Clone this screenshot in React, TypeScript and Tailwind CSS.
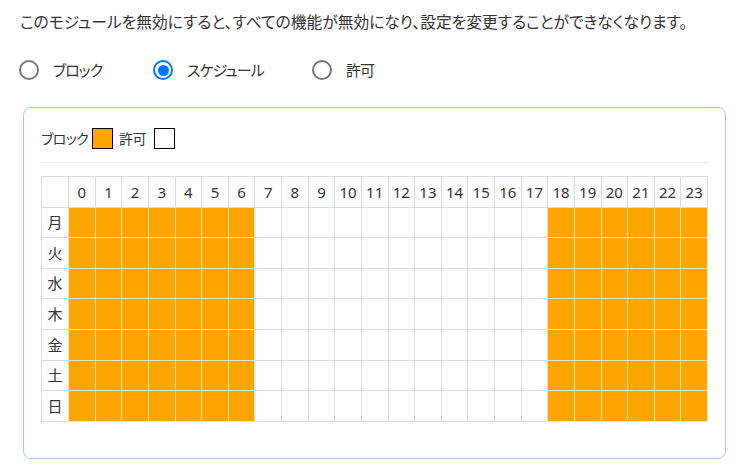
import { useState } from "react";

const days = ["月", "火", "水", "木", "金", "土", "日"];
const hours = Array.from({ length: 24 }, (_, i) => i);

// blocked hours (0-6, 18-23)
const isBlocked = (h: number) => h <= 6 || h >= 18;

function Radio({
  checked,
  label,
  width,
  onClick,
}: {
  checked: boolean;
  label: string;
  width: string;
  onClick: () => void;
}) {
  return (
    <label className={`flex items-center cursor-pointer ${width}`} onClick={onClick}>
      {checked ? (
        <span className="w-[20px] h-[20px] rounded-full border-2 border-[#0075ff] flex items-center justify-center">
          <span className="w-[11px] h-[11px] rounded-full bg-[#0075ff]" />
        </span>
      ) : (
        <span className="w-[20px] h-[20px] rounded-full border-2 border-[#767676]" />
      )}
      <span className="ml-[14px] text-[15px] text-[#333] tracking-[-1px] [font-feature-settings:'palt']">
        {label}
      </span>
    </label>
  );
}

function App() {
  const [mode, setMode] = useState("schedule");

  return (
    <div className="w-[749px] h-[468px] bg-white text-[#333] font-['Noto_Sans','Noto_Sans_CJK_JP',sans-serif] overflow-hidden">
      <div className="px-5 pt-[10px]">
        <p className="text-[15.75px] leading-6 [font-feature-settings:'palt']">
          このモジュールを無効にすると、すべての機能が無効になり、設定を変更することができなくなります。
        </p>
        <div className="flex items-center mt-[24px] h-[24px] -ml-[1px]">
          <Radio checked={mode === "block"} label="ブロック" width="w-[134px]" onClick={() => setMode("block")} />
          <Radio
            checked={mode === "schedule"}
            label="スケジュール"
            width="w-[159px]"
            onClick={() => setMode("schedule")}
          />
          <Radio checked={mode === "allow"} label="許可" width="w-[100px]" onClick={() => setMode("allow")} />
        </div>
      </div>

      <div className="mx-[23px] mt-[25px] border border-[#aac6e4] rounded-lg px-[17px] pt-[20px] pb-[36px]">
        <div className="flex items-center h-[21px] text-[14px] tracking-[-0.6px] [font-feature-settings:'palt']">
          <span>ブロック</span>
          <span className="w-[21px] h-[21px] bg-[#ffa500] border border-black ml-[4px]" />
          <span className="ml-[6px]">許可</span>
          <span className="w-[21px] h-[21px] bg-white border border-black ml-[8px]" />
        </div>
        <div className="border-t border-[#eeeeee] mt-[13px] mb-[13px]" />

        <div className="grid grid-cols-[27px_repeat(24,1fr)] auto-rows-[30.6px] border-l border-t border-[#dddddd] text-[15px]">
          <div className="border-r border-b border-[#dddddd]" />
          {hours.map((h) => (
            <div key={h} className="border-r border-b border-[#dddddd] flex items-center justify-center">
              {h}
            </div>
          ))}
          {days.map((d) => (
            <>
              <div key={d} className="border-r border-b border-[#dddddd] flex items-center justify-center">
                {d}
              </div>
              {hours.map((h) =>
                isBlocked(h) ? (
                  <div key={d + h} className="bg-[#ffa500] border-r border-b border-[#f7e2b2]" />
                ) : (
                  <div key={d + h} className="border-r border-b border-[#dddddd]" />
                )
              )}
            </>
          ))}
        </div>
      </div>
    </div>
  );
}

export default App;
